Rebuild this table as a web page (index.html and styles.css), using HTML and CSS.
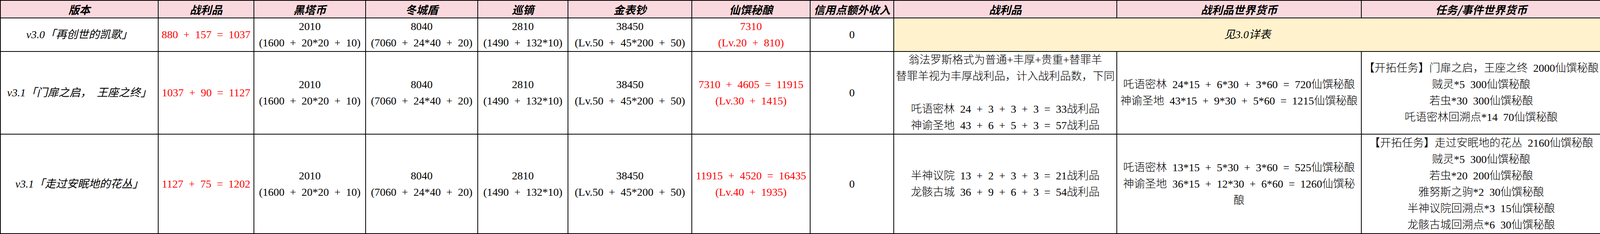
FILE: index.html
```html
<!DOCTYPE html>
<html lang="zh-CN">
<head>
<meta charset="utf-8">
<title>版本收益表</title>
<link rel="stylesheet" href="styles.css">
</head>
<body>
<table class="sheet">
  <colgroup>
    <col class="w-ver"><col class="w-loot"><col class="w-hei"><col class="w-dong"><col class="w-xun">
    <col class="w-jin"><col class="w-xian"><col class="w-xin"><col class="w-loot2"><col class="w-world"><col class="w-task">
  </colgroup>
  <thead>
    <tr class="row-head">
      <th>版本</th>
      <th>战利品</th>
      <th>黑塔币</th>
      <th>冬城盾</th>
      <th>巡镝</th>
      <th>金表钞</th>
      <th>仙馔秘酿</th>
      <th>信用点额外收入</th>
      <th>战利品</th>
      <th>战利品世界货币</th>
      <th>任务/事件世界货币</th>
    </tr>
  </thead>
  <tbody>
    <tr class="row-1">
      <td class="ver">v3.0「再创世的凯歌」</td>
      <td class="red">880 + 157 = 1037</td>
      <td><span class="ln">2010</span><span class="ln">(1600 + 20*20 + 10)</span></td>
      <td><span class="ln">8040</span><span class="ln">(7060 + 24*40 + 20)</span></td>
      <td><span class="ln">2810</span><span class="ln">(1490 + 132*10)</span></td>
      <td><span class="ln">38450</span><span class="ln">(Lv.50 + 45*200 + 50)</span></td>
      <td class="red"><span class="ln">7310</span><span class="ln">(Lv.20 + 810)</span></td>
      <td>0</td>
      <td class="see" colspan="3">见3.0详表</td>
    </tr>
    <tr class="row-2">
      <td class="ver">v3.1「门扉之启， 王座之终」</td>
      <td class="red">1037 + 90 = 1127</td>
      <td><span class="ln">2010</span><span class="ln">(1600 + 20*20 + 10)</span></td>
      <td><span class="ln">8040</span><span class="ln">(7060 + 24*40 + 20)</span></td>
      <td><span class="ln">2810</span><span class="ln">(1490 + 132*10)</span></td>
      <td><span class="ln">38450</span><span class="ln">(Lv.50 + 45*200 + 50)</span></td>
      <td class="red"><span class="ln">7310 + 4605 = 11915</span><span class="ln">(Lv.30 + 1415)</span></td>
      <td>0</td>
      <td>
        <span class="ln">翁法罗斯格式为普通+丰厚+贵重+替罪羊</span>
        <span class="ln">替罪羊视为丰厚战利品，计入战利品数，下同</span>
        <span class="ln">&nbsp;</span>
        <span class="ln">吒语密林 24 + 3 + 3 + 3 = 33战利品</span>
        <span class="ln">神谕圣地 43 + 6 + 5 + 3 = 57战利品</span>
      </td>
      <td>
        <span class="ln">吒语密林 24*15 + 6*30 + 3*60 = 720仙馔秘酿</span>
        <span class="ln">神谕圣地 43*15 + 9*30 + 5*60 = 1215仙馔秘酿</span>
      </td>
      <td>
        <span class="ln">【开拓任务】门扉之启，王座之终 2000仙馔秘酿</span>
        <span class="ln">贼灵*5 300仙馔秘酿</span>
        <span class="ln">若虫*30 300仙馔秘酿</span>
        <span class="ln">吒语密林回溯点*14 70仙馔秘酿</span>
      </td>
    </tr>
    <tr class="row-3">
      <td class="ver">v3.1「走过安眠地的花丛」</td>
      <td class="red">1127 + 75 = 1202</td>
      <td><span class="ln">2010</span><span class="ln">(1600 + 20*20 + 10)</span></td>
      <td><span class="ln">8040</span><span class="ln">(7060 + 24*40 + 20)</span></td>
      <td><span class="ln">2810</span><span class="ln">(1490 + 132*10)</span></td>
      <td><span class="ln">38450</span><span class="ln">(Lv.50 + 45*200 + 50)</span></td>
      <td class="red"><span class="ln">11915 + 4520 = 16435</span><span class="ln">(Lv.40 + 1935)</span></td>
      <td>0</td>
      <td>
        <span class="ln">半神议院 13 + 2 + 3 + 3 = 21战利品</span>
        <span class="ln">龙骸古城 36 + 9 + 6 + 3 = 54战利品</span>
      </td>
      <td>
        <span class="ln">吒语密林 13*15 + 5*30 + 3*60 = 525仙馔秘酿</span>
        <span class="ln">神谕圣地 36*15 + 12*30 + 6*60 = 1260仙馔秘</span>
        <span class="ln">酿</span>
      </td>
      <td>
        <span class="ln">【开拓任务】走过安眠地的花丛 2160仙馔秘酿</span>
        <span class="ln">贼灵*5 300仙馔秘酿</span>
        <span class="ln">若虫*20 200仙馔秘酿</span>
        <span class="ln">雅努斯之驹*2 30仙馔秘酿</span>
        <span class="ln">半神议院回溯点*3 15仙馔秘酿</span>
        <span class="ln">龙骸古城回溯点*6 30仙馔秘酿</span>
      </td>
    </tr>
  </tbody>
</table>
</body>
</html>
```

FILE: styles.css
```css
html, body {
  margin: 0;
  padding: 0;
  background: #ffffff;
}

body {
  font-family: "Liberation Serif", "Noto Sans CJK SC", serif;
  font-size: 28px;
  line-height: 42px;
  color: #000000;
  word-spacing: 7px;
}

.sheet {
  border-collapse: collapse;
  table-layout: fixed;
  width: 4100px;
}

.w-ver { width: 404px; }
.w-loot { width: 245px; }
.w-hei { width: 286px; }
.w-dong { width: 287px; }
.w-xun { width: 231px; }
.w-jin { width: 317px; }
.w-xian { width: 303px; }
.w-xin { width: 214px; }
.w-loot2 { width: 571px; }
.w-world { width: 626px; }
.w-task { width: 614px; }

.sheet th,
.sheet td {
  border: 2px solid #000000;
  padding: 0 4px;
  text-align: center;
  vertical-align: middle;
  white-space: nowrap;
  overflow: visible;
}

.sheet td {
  font-weight: 300;
}

.sheet th {
  background: #f9d9de;
  font-family: "Noto Sans CJK SC", sans-serif;
  font-weight: 700;
  font-style: italic;
  word-spacing: 0;
}

.row-head { height: 45px; }
.row-1 { height: 86px; }
.row-2 { height: 212px; }
.row-3 { height: 255px; }

.ln {
  display: block;
}

.sheet td.ver {
  font-style: italic;
  font-weight: 400;
}

.red {
  color: #ff0000;
}

.sheet td.see {
  background: #fff2cc;
  font-style: italic;
  font-weight: 400;
}
```
